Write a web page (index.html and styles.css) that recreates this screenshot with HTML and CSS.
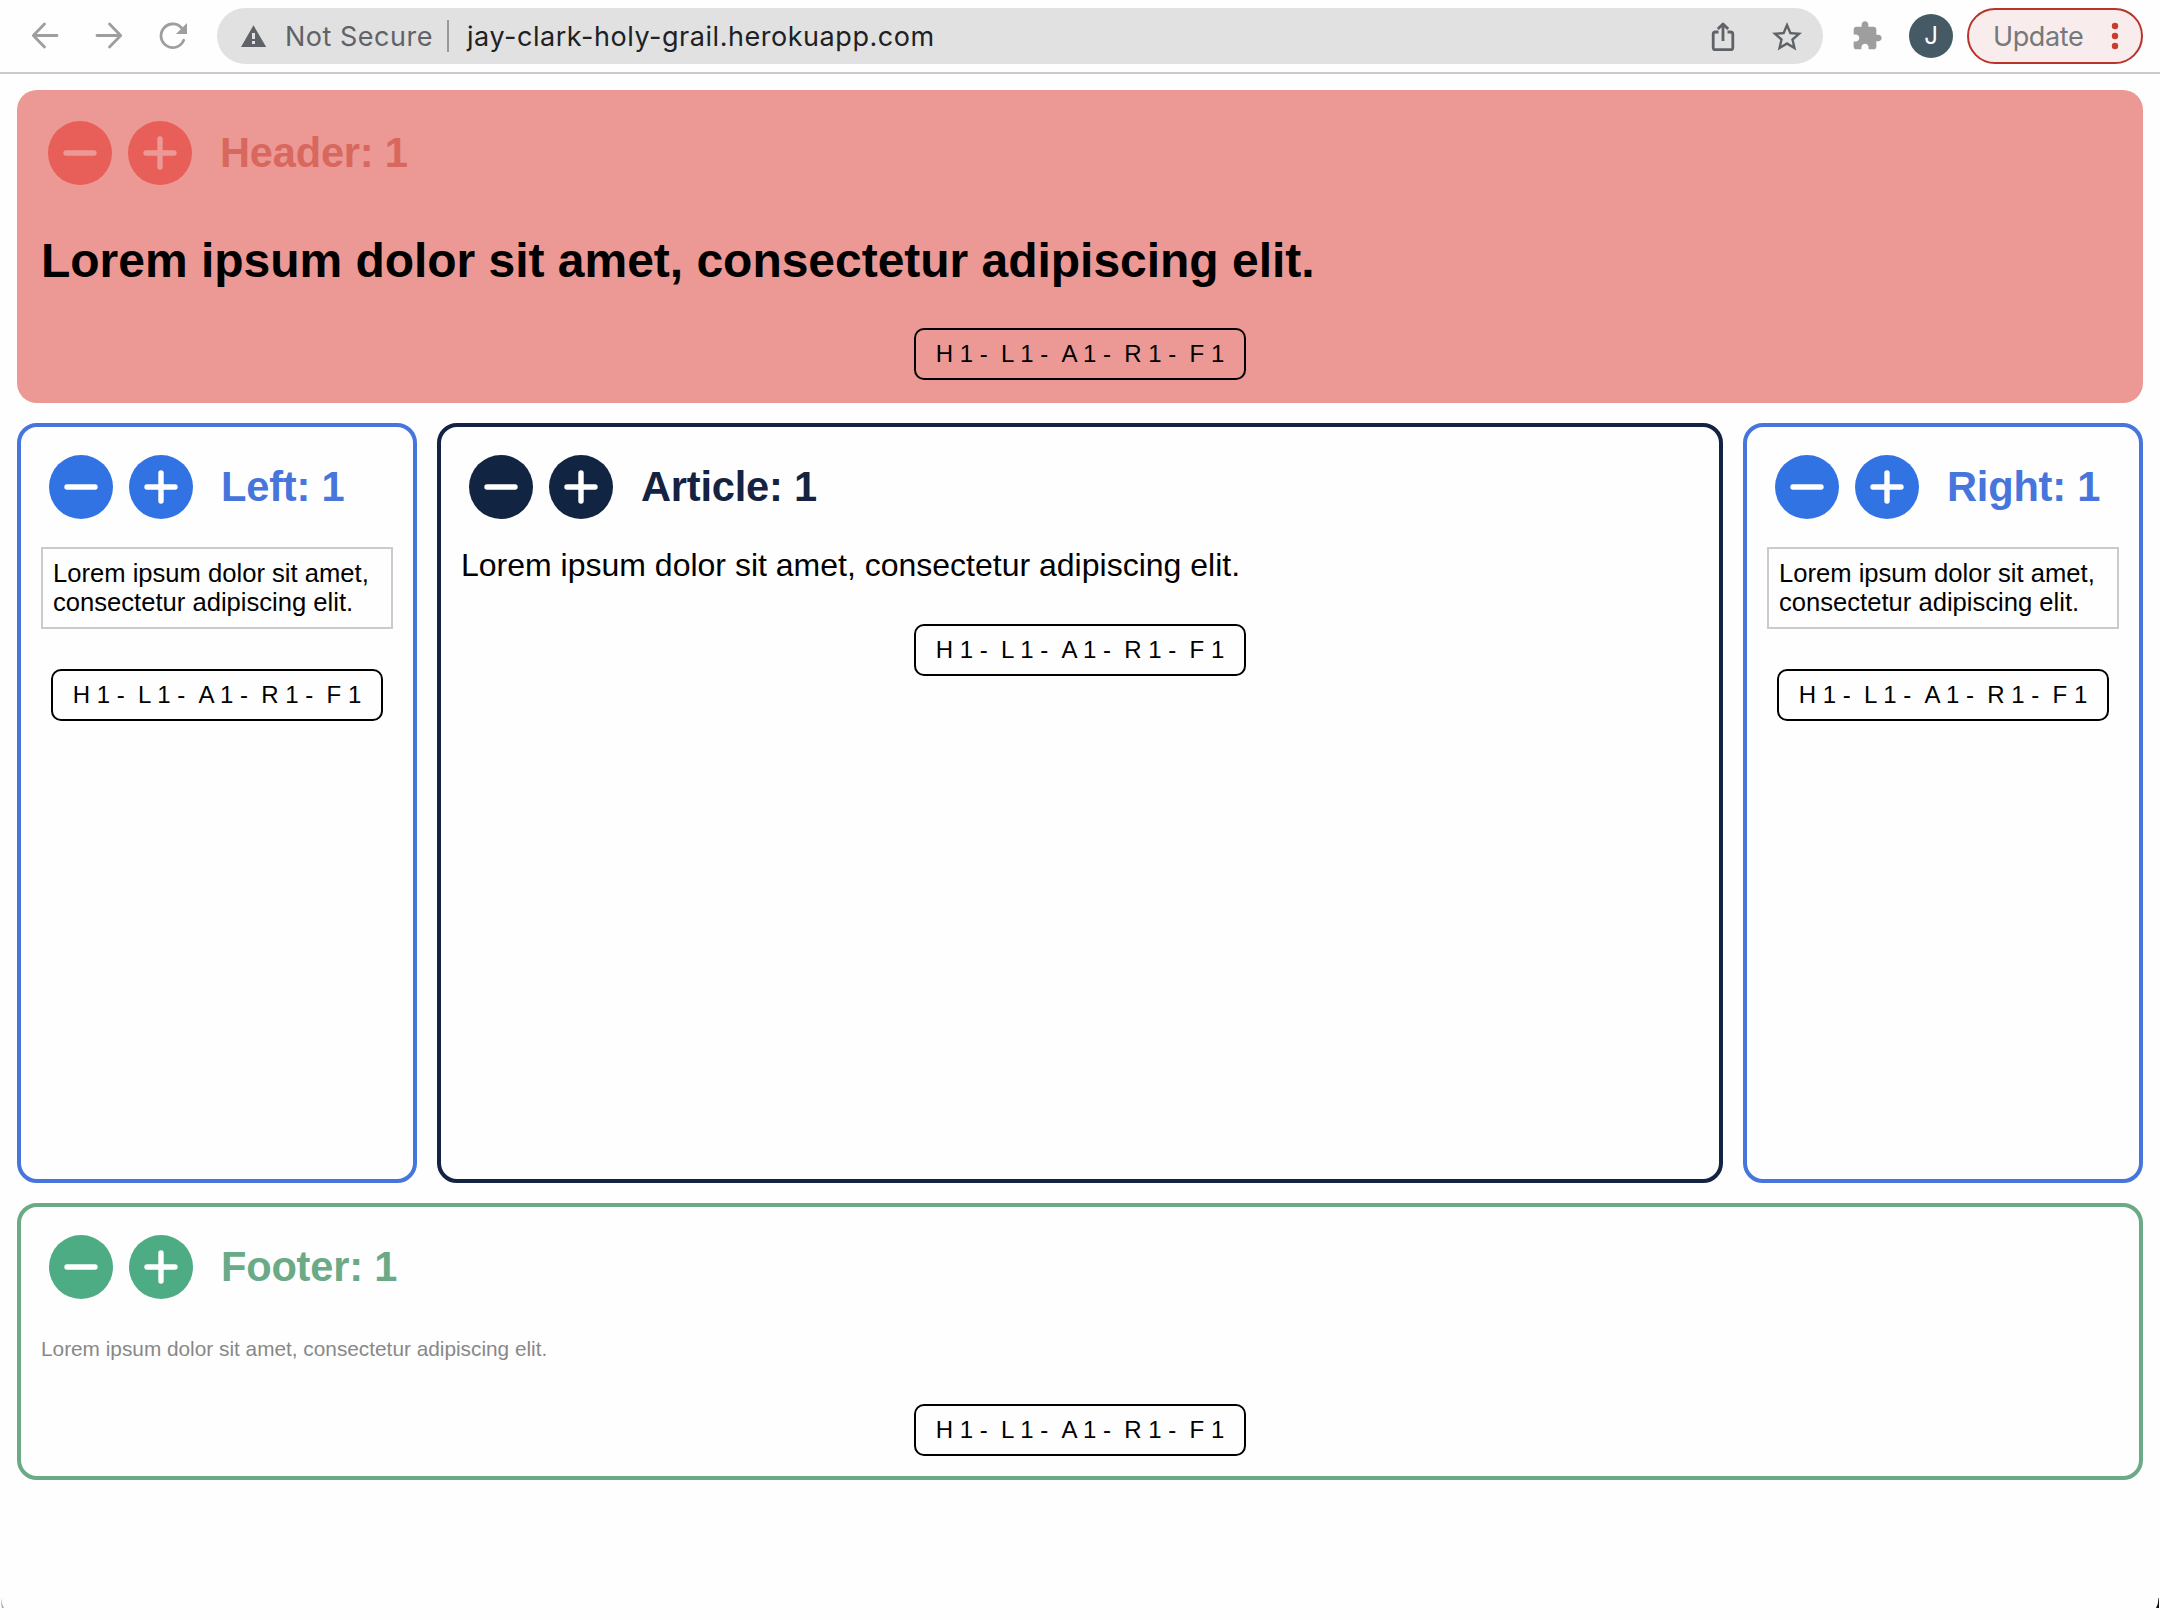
FILE: index.html
```html
<!DOCTYPE html>
<html lang="en">
<head>
<meta charset="utf-8">
<title>Holy Grail</title>
<link rel="stylesheet" href="styles.css">
</head>
<body>
<svg class="defs" width="0" height="0">
  <symbol id="minus" viewBox="0 0 64 64"><circle cx="32" cy="32" r="32" fill="currentColor"/><path class="sign" d="M18 32H46"/></symbol>
  <symbol id="plus" viewBox="0 0 64 64"><circle cx="32" cy="32" r="32" fill="currentColor"/><path class="sign" d="M18 32H46M32 18V46"/></symbol>
</svg>
<div class="toolbar">
  <nav class="nav">
    <svg class="nav-icon" viewBox="28 19 34 34"><path d="M57 35.5H34M44.5 24L33.3 35.5L44.5 47"/></svg>
    <svg class="nav-icon" viewBox="92 19 34 34"><path d="M97 35.5H120M109.5 24L120.7 35.5L109.5 47"/></svg>
    <svg class="nav-icon" viewBox="156 19 34 34"><path d="M183.7 40.3A11.8 11.8 0 1 1 181.5 27.8"/><path class="solid" d="M187 23V34H176Z"/></svg>
  </nav>
  <div class="address">
    <svg class="warning" viewBox="237 19 34 34"><path fill="#5f6368" fill-rule="evenodd" d="M253.5 25.3L266.2 47H241ZM252 33V39H255V33ZM252 41V44H255V41Z"/></svg>
    <span class="secure">Not Secure</span>
    <span class="divider"></span>
    <span class="url">jay-clark-holy-grail.herokuapp.com</span>
    <svg class="share" viewBox="1706 19 34 34"><path d="M1718.5 32H1715.5Q1713.2 32 1713.2 34.3V47.4Q1713.2 49.7 1715.5 49.7H1730.5Q1732.8 49.7 1732.8 47.4V34.3Q1732.8 32 1730.5 32H1727.5M1723 41V24.5M1717.8 29L1723 23.9L1728.2 29"/></svg>
    <svg class="star" viewBox="0 0 24 24"><path d="M22 9.24l-7.19-.62L12 2 9.19 8.63 2 9.24l5.46 4.73L5.82 21 12 17.27 18.18 21l-1.63-7.03L22 9.24zM12 15.4l-3.76 2.27 1-4.28-3.32-2.88 4.38-.38L12 6.1l1.71 4.04 4.38.38-3.32 2.88 1 4.28L12 15.4z"/></svg>
  </div>
  <svg class="extension" viewBox="0 0 24 24"><path d="M20.5 11H19V7c0-1.1-.9-2-2-2h-4V3.5C13 2.12 11.88 1 10.5 1S8 2.12 8 3.5V5H4c-1.1 0-1.99.9-1.99 2v3.8H3.5c1.49 0 2.7 1.21 2.7 2.7s-1.21 2.7-2.7 2.7H2V20c0 1.1.9 2 2 2h3.8v-1.5c0-1.49 1.21-2.7 2.7-2.7 1.49 0 2.7 1.21 2.7 2.7V22H17c1.1 0 2-.9 2-2v-4h1.5c1.38 0 2.5-1.12 2.5-2.5S21.88 11 20.5 11z"/></svg>
  <div class="avatar">J</div>
  <div class="update"><span class="update-text">Update</span><svg class="dots" viewBox="0 0 8 28"><circle cx="4" cy="4" r="3.2"/><circle cx="4" cy="14" r="3.2"/><circle cx="4" cy="24" r="3.2"/></svg></div>
</div>
<div class="page">
  <header class="card header">
    <div class="title"><svg class="btn"><use href="#minus"/></svg><svg class="btn"><use href="#plus"/></svg><h2 class="name">Header: 1</h2></div>
    <h1 class="headline">Lorem ipsum dolor sit amet, consectetur adipiscing elit.</h1>
    <div class="summary">H 1 - &nbsp;L 1 - &nbsp;A 1 - &nbsp;R 1 - &nbsp;F 1</div>
  </header>
  <main class="columns">
    <aside class="card side">
      <div class="title"><svg class="btn"><use href="#minus"/></svg><svg class="btn"><use href="#plus"/></svg><h2 class="name">Left: 1</h2></div>
      <p class="note">Lorem ipsum dolor sit amet, consectetur adipiscing elit.</p>
      <div class="summary">H 1 - &nbsp;L 1 - &nbsp;A 1 - &nbsp;R 1 - &nbsp;F 1</div>
    </aside>
    <article class="card article">
      <div class="title"><svg class="btn"><use href="#minus"/></svg><svg class="btn"><use href="#plus"/></svg><h2 class="name">Article: 1</h2></div>
      <p class="body-text">Lorem ipsum dolor sit amet, consectetur adipiscing elit.</p>
      <div class="summary">H 1 - &nbsp;L 1 - &nbsp;A 1 - &nbsp;R 1 - &nbsp;F 1</div>
    </article>
    <aside class="card side">
      <div class="title"><svg class="btn"><use href="#minus"/></svg><svg class="btn"><use href="#plus"/></svg><h2 class="name">Right: 1</h2></div>
      <p class="note">Lorem ipsum dolor sit amet, consectetur adipiscing elit.</p>
      <div class="summary">H 1 - &nbsp;L 1 - &nbsp;A 1 - &nbsp;R 1 - &nbsp;F 1</div>
    </aside>
  </main>
  <footer class="card footer">
    <div class="title"><svg class="btn"><use href="#minus"/></svg><svg class="btn"><use href="#plus"/></svg><h2 class="name">Footer: 1</h2></div>
    <p class="small-text">Lorem ipsum dolor sit amet, consectetur adipiscing elit.</p>
    <div class="summary">H 1 - &nbsp;L 1 - &nbsp;A 1 - &nbsp;R 1 - &nbsp;F 1</div>
  </footer>
</div>
<div class="window-edge">
  <svg width="4" height="10" viewBox="0 0 4 10"><path d="M1 0Q1.5 6 4 10H2Q1 7 1 0Z" fill="#aaa"/></svg>
  <svg width="4" height="10" viewBox="0 0 4 10"><path d="M3 0V10H0Q2.4 6 2.5 0Z" fill="#111"/></svg>
</div>
</body>
</html>
```
FILE: styles.css
```css
* { box-sizing: border-box; }
body {
  margin: 0;
  height: 1620px;
  display: flex;
  flex-direction: column;
  background: #fefefe;
  color: #000;
  font-family: "Liberation Sans", Arial, sans-serif;
  overflow: hidden;
}
h1, h2, p { margin: 0; }
svg { flex: none; display: block; }
.defs { display: none; }

/* Browser toolbar */
.toolbar {
  flex: none;
  display: flex;
  align-items: center;
  height: 74px;
  padding-right: 17px;
  border-bottom: 2px solid #cbcbcb;
  font-family: Inter, Roboto, sans-serif;
  font-size: 27px;
}
.nav { display: flex; gap: 30px; width: 217px; padding-left: 28px; flex: none; }
.nav-icon { width: 34px; height: 34px; fill: none; stroke: #9e9e9e; stroke-width: 2.8; stroke-linecap: round; stroke-linejoin: round; }
.nav-icon .solid { fill: #9e9e9e; stroke: none; }
.address {
  display: flex;
  align-items: center;
  width: 1606px;
  height: 56px;
  padding: 0 18px 0 20px;
  border-radius: 28px;
  background: #e1e1e1;
}
.warning { width: 34px; height: 34px; }
.secure { width: 162px; padding-left: 14px; white-space: nowrap; color: #5f6368; letter-spacing: 0.5px; margin-right: 14px; }
.divider { width: 2px; height: 32px; background: #97999c; }
.url { margin-left: 18px; color: #202124; white-space: nowrap; letter-spacing: 0.54px; }
.share { width: 34px; height: 34px; margin-left: auto; fill: none; stroke: #5f6368; stroke-width: 2.8; stroke-linejoin: round; }
.star { width: 36px; height: 36px; margin: 2px 0 0 29px; fill: #5f6368; }
.extension { width: 32px; height: 32px; margin-left: 28px; fill: #9e9e9e; }
.avatar {
  width: 44px;
  height: 44px;
  margin-left: 26px;
  border-radius: 50%;
  background: #455a64;
  color: #fff;
  font-size: 24px;
  line-height: 44px;
  text-align: center;
}
.update {
  display: flex;
  align-items: center;
  justify-content: space-between;
  width: 176px;
  height: 56px;
  margin-left: 14px;
  padding: 0 22px 0 24px;
  border: 2px solid #b93428;
  border-radius: 28px;
  background: #f9ecec;
  color: #74797c;
  letter-spacing: -0.4px;
}
.dots { width: 8px; height: 28px; fill: #c93c2d; }

/* Holy grail layout */
.page { flex: none; display: flex; flex-direction: column; gap: 20px; padding: 16px 17px 0; }
.card {
  display: flex;
  flex-direction: column;
  align-items: flex-start;
  padding: 28px 20px 20px;
  border: 4px solid var(--line);
  border-radius: 20px;
}
.columns { display: grid; grid-template-columns: 400px 1286px 400px; gap: 20px; height: 760px; }
.title { display: flex; align-items: center; gap: 16px; height: 64px; padding-left: 8px; }
.btn { width: 64px; height: 64px; color: var(--fill); }
.sign { fill: none; stroke: var(--sign, #fff); stroke-width: 5.4; stroke-linecap: round; }
.name { margin-left: 12px; color: var(--line); font-size: 41.6px; letter-spacing: -0.2px; line-height: 48px; white-space: nowrap; }
.summary {
  align-self: center;
  height: 52px;
  padding: 0 20px;
  border: 2px solid #000;
  border-radius: 10px;
  font-size: 24px;
  line-height: 48px;
  white-space: nowrap;
}
.header { --line: #d8685e; --fill: #e85e58; --sign: #ec9995; height: 313px; padding: 31px 24px 0; border: 0; background: #ec9995; }
.header .title { padding-left: 7px; }
.headline { margin: 48px 0 39px; font-size: 48px; letter-spacing: -0.025px; line-height: 56px; }
.side { --line: #4675dc; --fill: #3273e3; }
.note { width: 352px; margin: 28px 0 40px; padding: 10px; border: 2px solid #cbcbcb; font-size: 25.6px; line-height: 29px; }
.article { --line: #142341; --fill: #112542; }
.body-text { margin: 28px 0 41px; font-size: 32px; line-height: 36px; }
.footer { --line: #6aaa87; --fill: #4eac85; height: 277px; }
.small-text { margin: 38px 0 43px; color: #888; font-size: 20.8px; line-height: 24px; }

.window-edge { flex: none; display: flex; justify-content: space-between; margin-top: 118px; }
```
